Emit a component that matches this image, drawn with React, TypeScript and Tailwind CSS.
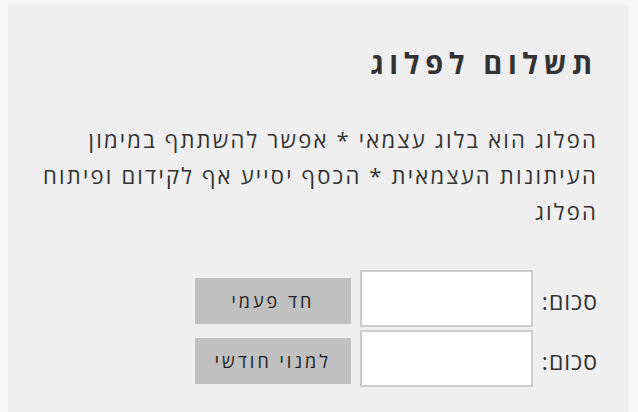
export default function App() {
  const rows = [
    { label: "סכום:", button: "חד פעמי" },
    { label: "סכום:", button: "למנוי חודשי" },
  ];

  return (
    <div className="min-h-[412px] bg-[#f6f6f6] pl-[8px] pr-[9px] pt-[4px] font-['Open_Sans',sans-serif] text-[#333]">
      <div dir="rtl" className="min-h-[408px] rounded-tr-[6px] rounded-tl-[2px] bg-[#efefef] pl-[20px] pr-[31px] pt-[37px]">
        <h2 className="text-[29px] font-bold leading-[44px] tracking-[5.6px] text-[#333]">תשלום לפלוג</h2>
        <p className="mt-[36px] text-[22px] leading-[36px] tracking-[2.2px]">
          הפלוג הוא בלוג עצמאי * אפשר להשתתף במימון העיתונות העצמאית * הכסף יסייע אף לקידום ופיתוח הפלוג
        </p>
        <div className="mt-[41px] flex flex-col gap-[3px]">
          {rows.map((row) => (
            <div key={row.button} className="flex items-center gap-[9px]">
              <span className="mt-[5px] text-[23px] leading-none tracking-[1px]">{row.label}</span>
              <input
                type="text"
                className="h-[57px] w-[173px] border-2 border-[#cccccc] bg-white outline-none"
              />
              <button
                type="button"
                className="mt-[5px] h-[46px] w-[156px] bg-[#c0c0c0] text-[18px] tracking-[3px] text-[#1e1e1e]"
              >
                {row.button}
              </button>
            </div>
          ))}
        </div>
      </div>
    </div>
  );
}
